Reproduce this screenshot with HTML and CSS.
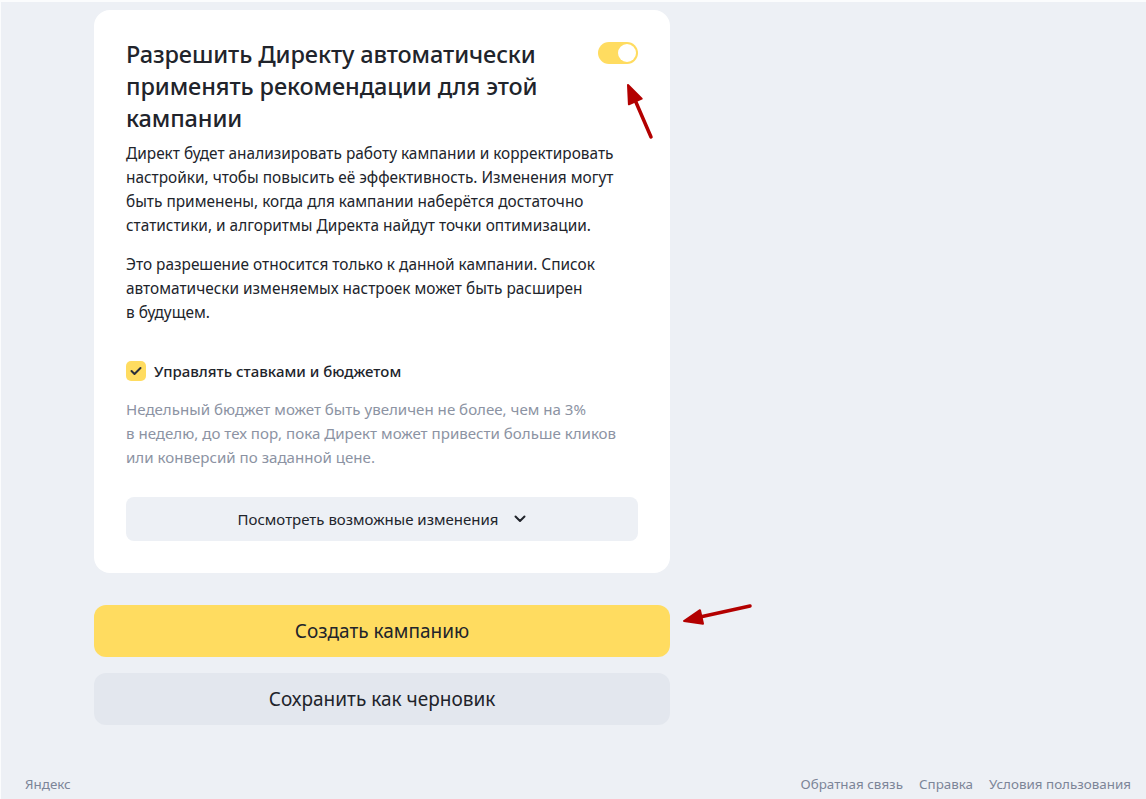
FILE: index.html
```html
<!DOCTYPE html>
<html lang="ru">
<head>
<meta charset="utf-8">
<link rel="stylesheet" href="styles.css">
</head>
<body>
<div class="page">
  <main class="main">
    <section class="card">
      <div class="head">
        <h1 class="title">Разрешить Директу автоматически применять рекомендации для этой кампании</h1>
        <div class="toggle"><span class="knob"></span></div>
      </div>
      <p class="text">Директ будет анализировать работу кампании и корректировать настройки, чтобы повысить её эффективность. Изменения могут быть применены, когда для кампании наберётся достаточно статистики, и алгоритмы Директа найдут точки оптимизации.</p>
      <p class="text text2">Это разрешение относится только к данной кампании. Список автоматически изменяемых настроек может быть расширен<br>в&nbsp;будущем.</p>
      <label class="check">
        <span class="box"><svg width="12" height="10" viewBox="0 0 12 10"><path d="M1.5 5 L4.5 8 L10.5 2" fill="none" stroke="#2b2f3a" stroke-width="2" stroke-linecap="round" stroke-linejoin="round"/></svg></span>
        <span class="check-label">Управлять ставками и бюджетом</span>
      </label>
      <p class="hint">Недельный бюджет может быть увеличен не более, чем на 3%<br>в неделю, до тех пор, пока Директ может привести больше кликов<br>или конверсий по заданной цене.</p>
      <button class="more">Посмотреть возможные изменения <svg width="12" height="8" viewBox="0 0 12 8"><path d="M1.5 1.5 L6 6 L10.5 1.5" fill="none" stroke="#21242b" stroke-width="2" stroke-linecap="round" stroke-linejoin="round"/></svg></button>
      <svg class="arrow arrow-up" width="34" height="62" viewBox="0 0 34 62"><path d="M27 56 L11 19" stroke="#b30000" stroke-width="3.5" stroke-linecap="round"/><path d="M4 4 L17.7 17.7 L4.9 23.3 Z" fill="#b30000" stroke="#b30000" stroke-width="2" stroke-linejoin="round"/></svg>
    </section>
    <button class="btn btn-primary">Создать кампанию</button>
    <button class="btn btn-secondary">Сохранить как черновик</button>
    <svg class="arrow arrow-left" width="82" height="28" viewBox="0 0 82 28"><path d="M76 4 L26 15" stroke="#b30000" stroke-width="3.5" stroke-linecap="round"/><path d="M10 19 L26 8.2 L29 21.8 Z" fill="#b30000" stroke="#b30000" stroke-width="2" stroke-linejoin="round"/></svg>
  </main>
  <footer class="footer">
    <span class="brand">Яндекс</span>
    <nav class="links">
      <a>Обратная связь</a>
      <a>Справка</a>
      <a>Условия пользования</a>
    </nav>
  </footer>
</div>
</body>
</html>
```
FILE: styles.css
```css
* { box-sizing: border-box; }
html, body { margin: 0; padding: 0; }
body {
  background: #fbfcfd;
  font-family: "Noto Sans", "Open Sans", sans-serif;
  color: #21242b;
}
.page {
  margin: 2px 0 0 1px;
  height: 797px;
  background: #edf0f5;
  display: flex;
  flex-direction: column;
}
.main {
  position: relative;
  width: 576px;
  margin: 8px 0 0 93px;
  display: flex;
  flex-direction: column;
}
.card {
  position: relative;
  background: #fff;
  border-radius: 16px;
  padding: 28px 32px 32px;
  display: flex;
  flex-direction: column;
}
.head {
  display: flex;
  justify-content: space-between;
  align-items: flex-start;
}
.title {
  margin: 0;
  width: 430px;
  font-size: 23.5px;
  line-height: 32px;
  font-weight: 500;
  color: #21242b;
  letter-spacing: -0.1px;
}
.toggle {
  margin-top: 4px;
  width: 40px;
  height: 22px;
  border-radius: 11px;
  background: #ffdc60;
  display: flex;
  justify-content: flex-end;
  align-items: center;
  padding: 2px;
}
.knob {
  width: 18px;
  height: 18px;
  border-radius: 50%;
  background: #fff;
}
.text {
  margin: 8px 0 0;
  max-width: 500px;
  font-size: 15.4px;
  line-height: 24px;
  color: #21242b;
}
.text2 { margin-top: 15px; }
.check {
  margin-top: 36px;
  display: flex;
  align-items: center;
  gap: 8px;
}
.box {
  width: 20px;
  height: 20px;
  border-radius: 5px;
  background: #ffdc60;
  display: flex;
  align-items: center;
  justify-content: center;
}
.check-label {
  font-size: 15px;
  font-weight: 500;
}
.hint {
  margin: 16px 0 0;
  font-size: 15.1px;
  line-height: 24px;
  color: #8c93a3;
}
.more {
  margin-top: 28px;
  height: 44px;
  border: 0;
  border-radius: 8px;
  background: #edf0f5;
  font-family: inherit;
  font-size: 15px;
  color: #21242b;
  display: flex;
  align-items: center;
  justify-content: center;
  gap: 16px;
}
.btn {
  height: 52px;
  border: 0;
  border-radius: 12px;
  font-family: inherit;
  font-size: 19px;
  color: #21242b;
}
.btn-primary { margin-top: 32px; background: #ffdc60; }
.btn-secondary { margin-top: 16px; background: #e3e7ee; }
.arrow { position: absolute; }
.arrow-up { left: 530px; top: 71px; }
.arrow-left { left: 580px; top: 592px; }
.footer {
  margin-top: auto;
  height: 24px;
  padding: 0 15px 0 24px;
  display: flex;
  justify-content: space-between;
  align-items: flex-start;
  font-size: 13.4px;
  color: #7c8598;
}
.links { display: flex; gap: 16px; }
```
